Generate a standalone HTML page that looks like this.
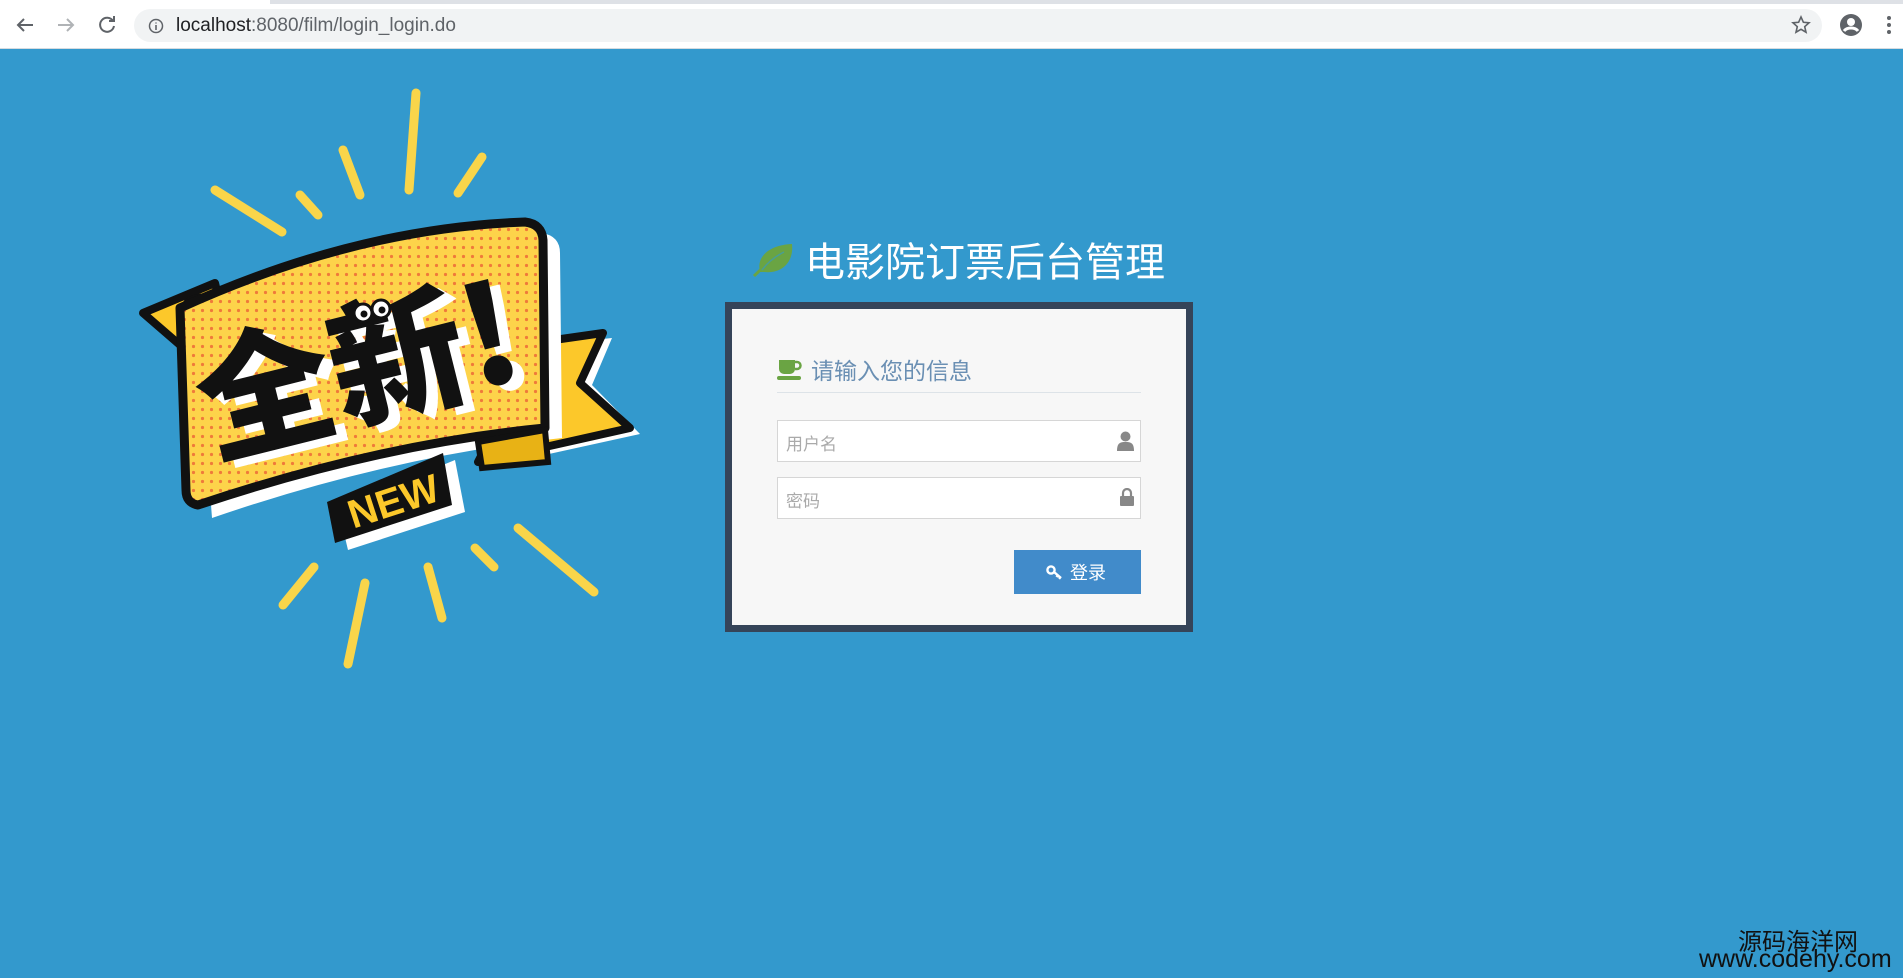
<!DOCTYPE html>
<html><head><meta charset="utf-8">
<style>
*{margin:0;padding:0;box-sizing:border-box}
body{width:1903px;height:978px;overflow:hidden;background:#3399cd;font-family:"Liberation Sans","Noto Sans CJK SC",sans-serif;position:relative}
.top{position:absolute;left:0;top:0;width:1903px;height:49px;background:#fff;border-bottom:1px solid #d5dbe0}
.strip{position:absolute;left:0;top:0;width:1903px;height:4px;background:#dee1e6}
.tab{position:absolute;left:0;top:0;width:270px;height:4px;background:#fff}
.omni{position:absolute;left:134px;top:9px;width:1688px;height:33px;border-radius:17px;background:#f1f3f4}
.url{position:absolute;left:176px;top:15px;font-size:19px;color:#202124}
.url span{color:#5f6368}
.abs{position:absolute}
.title{position:absolute;left:805px;top:230px;font-size:40px;color:#fff;white-space:nowrap}
.panel{position:absolute;left:725px;top:302px;width:468px;height:330px;background:#354459;padding:7px}
.inner{width:100%;height:100%;background:#f7f7f7;position:relative}
.h{position:absolute;left:79px;top:43px;font-size:23px;color:#6a8fb3;white-space:nowrap}
.line{position:absolute;left:45px;top:83px;width:364px;height:1px;background:#dde3e8}
.inp{position:absolute;left:45px;width:364px;height:42px;background:#fff;border:1px solid #d6d6d6;font-size:17px;color:#aaa;padding:9px 8px}
.btn{position:absolute;left:282px;top:241px;width:127px;height:44px;background:#418bca;color:#fff;font-size:18px;padding:9px 0 0 56px}
.wm{position:absolute;color:#111;white-space:nowrap}
</style></head><body>
<div class="top"><div class="strip"></div><div class="tab"></div>
<svg class="abs" style="left:14px;top:14px" width="22" height="22" viewBox="0 0 22 22"><path d="M19 11H4M10 5l-6 6 6 6" stroke="#5f6368" stroke-width="2" fill="none"/></svg>
<svg class="abs" style="left:55px;top:14px" width="22" height="22" viewBox="0 0 22 22"><path d="M3 11h15M12 5l6 6-6 6" stroke="#b0b3b6" stroke-width="2" fill="none"/></svg>
<svg class="abs" style="left:96px;top:14px" width="22" height="22" viewBox="0 0 22 22"><path d="M17 7A7 7 0 1 0 18 12" stroke="#5f6368" stroke-width="2" fill="none"/><path d="M13 7h5V2" stroke="#5f6368" stroke-width="2" fill="none"/></svg>
<div class="omni"></div>
<svg class="abs" style="left:148px;top:18px" width="16" height="16" viewBox="0 0 16 16"><circle cx="8" cy="8" r="6.5" stroke="#5f6368" stroke-width="1.5" fill="none"/><path d="M8 7v5M8 4.5v1" stroke="#5f6368" stroke-width="1.6"/></svg>
<div class="url">localhost<span>:8080/film/login_login.do</span></div>
<svg class="abs" style="left:1791px;top:15px" width="20" height="20" viewBox="0 0 20 20"><path d="M10 2l2.4 5.3 5.6.5-4.3 3.8 1.3 5.6L10 14.3 5 17.2l1.3-5.6L2 7.8l5.6-.5z" stroke="#5f6368" stroke-width="1.6" fill="none"/></svg>
<svg class="abs" style="left:1839px;top:13px" width="24" height="24" viewBox="0 0 24 24"><circle cx="12" cy="12" r="11" fill="#5f6368"/><circle cx="12" cy="9" r="4" fill="#fff"/><path d="M5 18c3-4 11-4 14 0" stroke="#fff" stroke-width="3" fill="none"/></svg>
<svg class="abs" style="left:1886px;top:15px" width="6" height="20" viewBox="0 0 6 20"><circle cx="3" cy="3" r="2" fill="#5f6368"/><circle cx="3" cy="10" r="2" fill="#5f6368"/><circle cx="3" cy="17" r="2" fill="#5f6368"/></svg>
</div>

<svg class="abs" style="left:0;top:0" width="700" height="700" viewBox="0 0 700 700">
<defs><pattern id="dots" width="9" height="9" patternUnits="userSpaceOnUse"><rect width="9" height="9" fill="#fdd34a"/><circle cx="4.5" cy="4.5" r="1.6" fill="#ef7a3a"/></pattern></defs>
<g stroke="#f9d54a" stroke-width="9" stroke-linecap="round">
<line x1="416" y1="93" x2="409" y2="190"/><line x1="343" y1="150" x2="360" y2="195"/><line x1="482" y1="157" x2="458" y2="193"/>
<line x1="215" y1="190" x2="282" y2="232"/><line x1="300" y1="195" x2="318" y2="215"/>
<line x1="518" y1="528" x2="594" y2="592"/><line x1="475" y1="548" x2="494" y2="567"/><line x1="428" y1="567" x2="442" y2="618"/>
<line x1="314" y1="567" x2="283" y2="605"/><line x1="365" y1="583" x2="348" y2="664"/></g>
<polygon points="545,345 612,338 592,385 640,434 485,468" fill="#fff"/>
<polygon points="540,342 603,333 580,383 630,428 478,462" fill="#fcc82a" stroke="#111" stroke-width="8" stroke-linejoin="round"/>
<polygon points="143,313 215,283 230,345 180,345" fill="#fcc82a" stroke="#111" stroke-width="8" stroke-linejoin="round"/>
<ellipse cx="205" cy="305" rx="20" ry="9" fill="#e8b215" stroke="#111" stroke-width="5"/>
<path d="M185,312 Q360,230 530,225 Q548,228 548,245 L550,430 Q380,448 200,510 Z" fill="#fff" transform="translate(12,8)"/>
<path d="M180,308 Q355,228 525,222 Q542,224 543,240 L545,428 Q380,444 198,505 Q186,503 186,490 Z" fill="url(#dots)" stroke="#111" stroke-width="9" stroke-linejoin="round"/>
<path d="M478,442 L545,430 L548,462 L482,468Z" fill="#e8b215" stroke="#111" stroke-width="6"/>
<polygon points="338,508 455,460 465,512 348,550" fill="#fff"/>
<polygon points="327,502 443,453 452,505 335,543" fill="#111"/>
<text x="393" y="515" font-family="Liberation Sans" font-weight="bold" font-size="40" fill="#fcc82a" text-anchor="middle" transform="rotate(-18 393 500)">NEW</text>
<g transform="rotate(-14 360 370)" font-family="Noto Sans CJK SC,sans-serif" font-weight="900" font-size="136" text-anchor="middle">
<text x="368" y="425" fill="#fff">全新!</text>
<text x="358" y="417" fill="#111">全新!</text></g>
<circle cx="363" cy="313" r="9" fill="#fff" stroke="#111" stroke-width="3"/><circle cx="381" cy="309" r="9" fill="#fff" stroke="#111" stroke-width="3"/>
<circle cx="364" cy="314" r="3.5" fill="#111"/><circle cx="382" cy="310" r="3.5" fill="#111"/>
</svg>

<svg class="abs" style="left:752px;top:242px" width="44" height="36" viewBox="0 0 44 36"><path d="M8 30C4 14 18 3 40 2 42 20 30 32 12 30Z" fill="#6aa443"/><path d="M2 34C10 26 20 18 30 12" stroke="#6aa443" stroke-width="3" fill="none"/><path d="M10 28C16 20 24 14 32 10" stroke="#3399cd" stroke-width="1.5" fill="none" opacity=".6"/></svg>
<div class="title">电影院订票后台管理</div>

<div class="panel"><div class="inner">
<svg class="abs" style="left:45px;top:51px" width="25" height="21" viewBox="0 0 25 21"><path d="M2 0h16v9a5 5 0 0 1-5 5H7a5 5 0 0 1-5-5Z" fill="#6aa443"/><path d="M18 2h2a3.5 3.5 0 0 1 0 7h-2" stroke="#6aa443" stroke-width="2.5" fill="none"/><rect x="0" y="16" width="24" height="4" rx="2" fill="#6aa443"/></svg>
<div class="h">请输入您的信息</div>
<div class="line"></div>
<div class="inp" style="top:111px">用户名
<svg class="abs" style="right:6px;top:10px" width="17" height="20" viewBox="0 0 17 20"><circle cx="8.5" cy="5.5" r="5" fill="#888"/><path d="M0 20c0-8 3-9 8.5-9S17 12 17 20Z" fill="#888"/></svg></div>
<div class="inp" style="top:168px">密码
<svg class="abs" style="right:6px;top:10px" width="14" height="18" viewBox="0 0 14 18"><path d="M3 8V5a4 4 0 0 1 8 0v3" stroke="#888" stroke-width="2.2" fill="none"/><rect x="0" y="8" width="14" height="10" rx="1" fill="#888"/></svg></div>
<div class="btn">登录
<svg class="abs" style="left:32px;top:14px" width="17" height="16" viewBox="0 0 17 16"><circle cx="5" cy="6" r="3.6" stroke="#fff" stroke-width="2.4" fill="none"/><path d="M8 8l7 6M12 11l-1.5 2M14.5 13l-1.5 1.8" stroke="#fff" stroke-width="2.4"/></svg></div>
</div></div>

<div class="wm" style="top:922px;left:1738px;font-size:24px">源码海洋网</div>
<div class="wm" style="top:945px;left:1699px;font-size:25px">www.codehy.com</div>
</body></html>
